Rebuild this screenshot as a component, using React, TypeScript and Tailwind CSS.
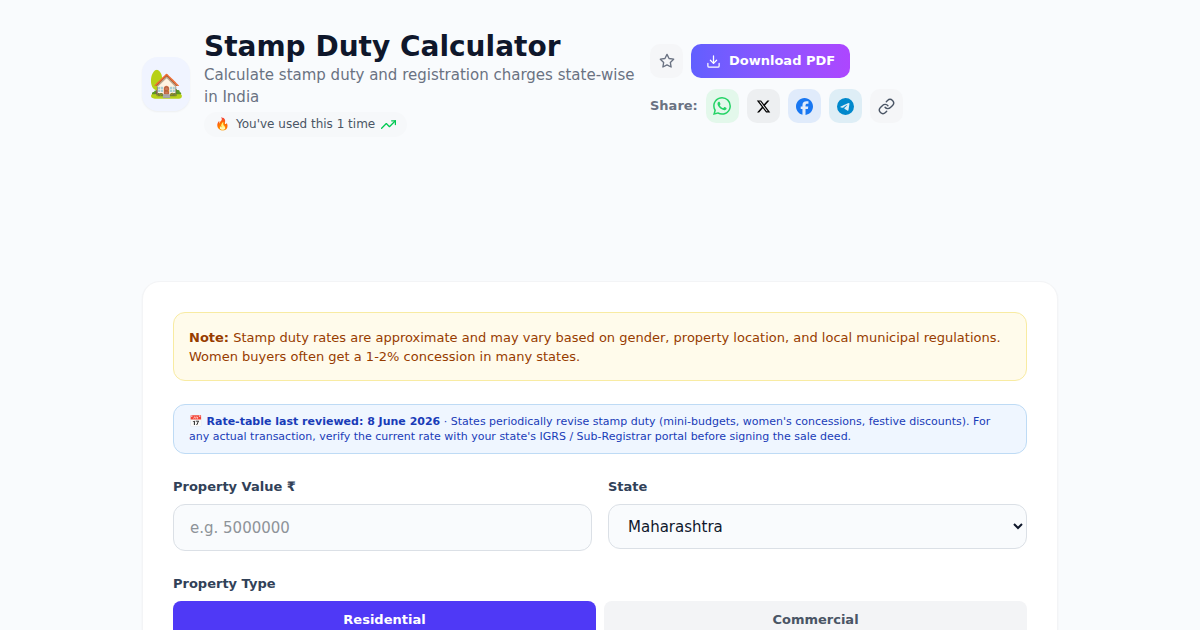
import { useState } from 'react'
import type { ReactNode } from 'react'
import { FiDownload, FiLink, FiStar, FiTrendingUp } from 'react-icons/fi'
import { FaFacebook, FaXTwitter } from 'react-icons/fa6'
import { SiTelegram, SiWhatsapp } from 'react-icons/si'

const STATES = ['Maharashtra', 'Delhi', 'Gujarat', 'Karnataka', 'Kerala', 'Rajasthan', 'Tamil Nadu']
const TYPES = ['Residential', 'Commercial']

export default function App() {
  const [value, setValue] = useState('')
  const [region, setRegion] = useState('Maharashtra')
  const [type, setType] = useState('Residential')

  return (
    <main className="min-h-screen bg-[#f9fbfd] px-4 pt-[30px] font-['DejaVu_Sans',sans-serif] text-slate-900">
      <div className="mx-auto max-w-[916px]">
        <header className="flex flex-wrap items-center gap-[14px] md:flex-nowrap">
          <div className="flex items-center gap-[14px] md:max-w-[494px]">
            <div className="flex h-[54px] w-12 shrink-0 items-center justify-center rounded-2xl bg-[#f0f4ff] text-[28px] shadow-xs">
              <span role="img" aria-label="House">🏡</span>
            </div>
            <div>
              <h1 className="text-[28px] leading-[34px] font-bold">Stamp Duty Calculator</h1>
              <p className="text-[15px] leading-[22px] text-gray-500">
                Calculate stamp duty and registration charges state-wise in India
              </p>
              <p className="mt-1 inline-flex items-center gap-[6px] rounded-full bg-[#f6f8fa] px-[11px] text-xs leading-[25px] text-gray-600">
                <span>🔥</span>
                <span>You've used this 1 time</span>
                <FiTrendingUp className="h-[15px] w-[15px] text-green-500" />
              </p>
            </div>
          </div>

          <div className="flex flex-col gap-[11px]">
            <div className="flex gap-2">
              <button
                aria-label="Add to favourites"
                className="flex h-[34px] w-[33px] items-center justify-center rounded-[10px] bg-[#f5f6f8] text-gray-500"
              >
                <FiStar className="h-4 w-4" />
              </button>
              <button className="flex h-[34px] items-center gap-2 rounded-[10px] bg-linear-to-r from-[#615fff] to-[#ad46ff] px-[15px] text-[13px] font-bold text-white">
                <FiDownload className="h-[15px] w-[15px]" />
                Download PDF
              </button>
            </div>
            <div className="flex items-center gap-2">
              <span className="text-[13px] font-bold text-gray-500">Share:</span>
              <ShareLink label="WhatsApp" className="bg-[#e3f8eb] text-[#25d366]">
                <SiWhatsapp className="h-[18px] w-[18px]" />
              </ShareLink>
              <ShareLink label="X" className="bg-[#edeff1] text-black">
                <FaXTwitter className="h-[15px] w-[15px]" />
              </ShareLink>
              <ShareLink label="Facebook" className="bg-[#e0ebfb] text-[#1877f2]">
                <FaFacebook className="h-[17px] w-[17px]" />
              </ShareLink>
              <ShareLink label="Telegram" className="bg-[#deeef6] text-[#0088cc]">
                <SiTelegram className="h-[17px] w-[17px]" />
              </ShareLink>
              <ShareLink label="Copy link" className="bg-[#f5f6f8] text-gray-600">
                <FiLink className="h-[17px] w-[17px]" />
              </ShareLink>
            </div>
          </div>
        </header>

        <section className="mt-36 rounded-[18px] border border-gray-100 bg-white p-[30px] shadow-xs">
          <div className="rounded-xl border border-[#f8eba2] bg-[#fffbeb] px-[15px] pt-[15px] pb-[14px] text-[13px] leading-[19px] text-[#973c00]">
            <strong>Note:</strong> Stamp duty rates are approximate and may vary based on gender, property
            location, and local municipal regulations. Women buyers often get a 1-2% concession in many
            states.
          </div>

          <div className="mt-[23px] rounded-xl border border-[#bedbf5] bg-[#eff6ff] py-[9px] pr-8 pl-[15px] text-[11px] leading-[15px] text-[#193cb8]">
            📅 <strong>Rate-table last reviewed: 8 June 2026</strong> · States periodically revise stamp duty
            (mini-budgets, women's concessions, festive discounts). For any actual transaction, verify the
            current rate with your state's IGRS / Sub-Registrar portal before signing the sale deed.
          </div>

          <form className="mt-[23px]" onSubmit={e => e.preventDefault()}>
            <div className="grid items-start gap-4 sm:grid-cols-2">
              <div>
                <label htmlFor="value" className="mb-[7px] block text-[13px] leading-5 font-bold text-slate-700">
                  Property Value ₹
                </label>
                <input
                  id="value"
                  inputMode="numeric"
                  placeholder="e.g. 5000000"
                  value={value}
                  onChange={e => setValue(e.target.value)}
                  className="block h-[47px] w-full rounded-xl border border-[#dbe0e6] bg-[#f9fbfd] px-4 text-[15px] placeholder:text-[#8e9399]"
                />
              </div>
              <div>
                <label htmlFor="state" className="mb-[7px] block text-[13px] leading-5 font-bold text-slate-700">
                  State
                </label>
                <select
                  id="state"
                  value={region}
                  onChange={e => setRegion(e.target.value)}
                  className="block h-[45px] w-full rounded-xl border border-[#dbe0e6] bg-[#f9fbfd] px-[15px] text-[15px]"
                >
                  {STATES.map(s => (
                    <option key={s}>{s}</option>
                  ))}
                </select>
              </div>
            </div>

            <fieldset className="mt-[23px]">
              <legend className="mb-[7px] text-[13px] leading-5 font-bold text-slate-700">Property Type</legend>
              <div className="grid grid-cols-2 gap-2">
                {TYPES.map(t => (
                  <button
                    key={t}
                    type="button"
                    aria-pressed={type === t}
                    onClick={() => setType(t)}
                    className={`h-[38px] rounded-lg text-[13px] font-bold ${
                      type === t ? 'bg-[#4f39f6] text-white' : 'bg-gray-100 text-gray-600'
                    }`}
                  >
                    {t}
                  </button>
                ))}
              </div>
            </fieldset>
          </form>
        </section>
      </div>
    </main>
  )
}

interface ShareLinkProps {
  label: string
  className: string
  children: ReactNode
}

function ShareLink({ label, className, children }: ShareLinkProps) {
  return (
    <a
      href="#share"
      aria-label={label}
      className={`flex h-[34px] w-[33px] items-center justify-center rounded-[10px] ${className}`}
    >
      {children}
    </a>
  )
}
